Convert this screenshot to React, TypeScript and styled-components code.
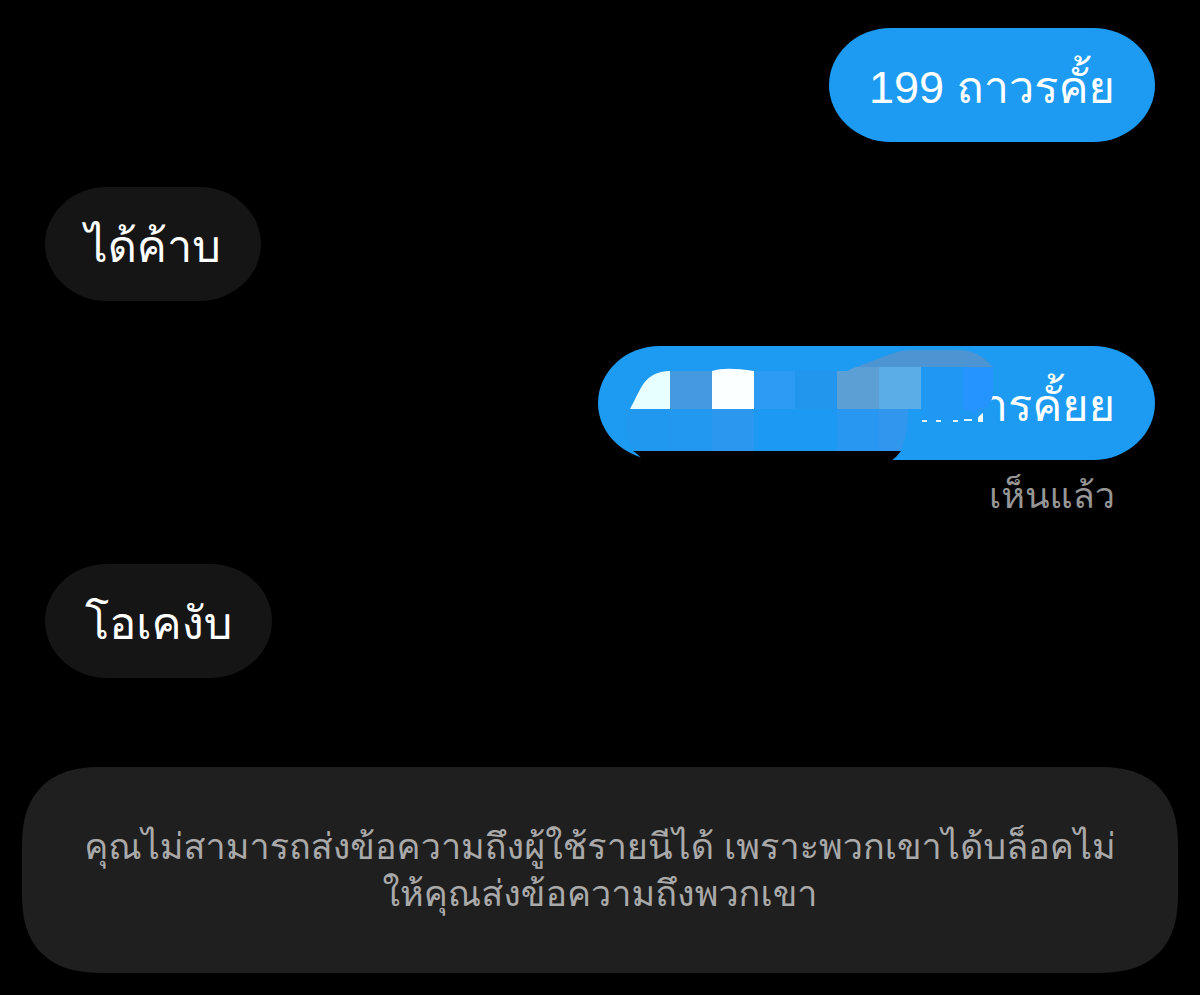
import React from 'react';
import styled, { createGlobalStyle } from 'styled-components';

const GlobalStyle = createGlobalStyle`
  * {
    box-sizing: border-box;
  }

  body {
    margin: 0;
    background: #000;
    color: #fff;
    font-family: "Liberation Sans", Loma, sans-serif;
  }
`;

const Screen = styled.main`
  display: flex;
  flex-direction: column;
  gap: 89px;
  padding: 28px 22px 22px;
`;

const Thread = styled.section`
  display: flex;
  flex-direction: column;
  padding: 0 23px;
`;

const Row = styled.div<{ $own?: boolean }>`
  display: flex;
  flex-direction: column;
  align-items: ${p => (p.$own ? 'flex-end' : 'flex-start')};

  & + & {
    margin-top: 45px;
  }
`;

const Bubble = styled.p<{ $own?: boolean }>`
  position: relative;
  margin: 0;
  padding: 30px 40px 24px;
  border-radius: 62px / 57px;
  background: ${p => (p.$own ? '#1d9bf3' : '#151515')};
  font-size: 45px;
  line-height: 60px;
  white-space: nowrap;
`;

const CensoredBubble = styled(Bubble)`
  width: 557px;
  text-align: right;
`;

const Mosaic = styled.svg`
  position: absolute;
  top: 0;
  left: 0;
  width: 400px;
  height: 120px;
`;

const Seen = styled.span`
  padding: 12px 40px 0;
  color: #969696;
  font-size: 36px;
  line-height: 47px;
`;

const Notice = styled.footer`
  padding: 56px 40px;
  border-radius: 68px;
  background: #1f1f1f;
  color: #a9a9a9;
  font-size: 36px;
  line-height: 47px;
  text-align: center;

  @supports (corner-shape: superellipse(1.3)) {
    border-radius: 80px;
    corner-shape: superellipse(1.3);
  }
`;

const tiles = [
  { x: 72, y: 25, w: 42, h: 38, fill: '#4499df' },
  { x: 156, y: 25, w: 41, h: 38, fill: '#2d9af4' },
  { x: 197, y: 25, w: 42, h: 38, fill: '#2295ec' },
  { x: 281, y: 21, w: 42, h: 42, fill: '#5aade6' },
  { x: 72, y: 63, w: 42, h: 42, fill: '#2398f0' },
  { x: 114, y: 63, w: 42, h: 42, fill: '#2c97ee' },
  { x: 156, y: 63, w: 83, h: 42, fill: '#1c99f3' },
  { x: 239, y: 63, w: 42, h: 42, fill: '#2897f2' },
];

function CensorMosaic() {
  return (
    <Mosaic viewBox="0 0 400 120" aria-hidden="true">
      <path d="M249 25C262 20 280 12 299 6C306 4 312 4 319 4H360C376 4 386 11 395 21H281V25Z" fill="#4d94d3" />
      <path d="M323 21H395V48C393 60 386 70 372 74H323Z" fill="#1f98f3" />
      <path d="M365 21H395V48C393 56 388 62 380 67L365 63Z" fill="#2694ff" />
      {tiles.map(t => (
        <rect key={`${t.x}-${t.y}`} x={t.x} y={t.y} width={t.w} height={t.h} fill={t.fill} />
      ))}
      <path d="M239 25H249L258 21H281V63H239Z" fill="#5c9fd5" />
      <path d="M28 63H72V105H36C28 94 25 78 28 63Z" fill="#2198f0" />
      <path d="M281 63H310C310 80 308 92 303 105H281Z" fill="#3096ee" />
      <path d="M32 63C37 54 41 44 46 37C52 29 61 25 72 25V63Z" fill="#e8ffff" />
      <path d="M114 25C124 22 136 22 156 25V63H114Z" fill="#fbffff" />
      <path d="M35 105H303C300 109 297 112 293 115V120H35V113L43 112C41 109 38 107 35 105Z" fill="#000" />
      <path d="M324 75h5M338 75h5M355 75h5M366 74h8" stroke="#dff4ff" strokeWidth="2" />
      <path d="M380 76V72C381 70 383 68 385 67V76Z" fill="#f4fdff" />
    </Mosaic>
  );
}

export default function App() {
  return (
    <>
      <GlobalStyle />
      <Screen>
        <Thread>
          <Row $own>
            <Bubble $own>199 ถาวรคั้ย</Bubble>
          </Row>
          <Row>
            <Bubble>ได้ค้าบ</Bubble>
          </Row>
          <Row $own>
            <CensoredBubble $own>
              ารคั้ยย
              <CensorMosaic />
            </CensoredBubble>
            <Seen>เห็นแล้ว</Seen>
          </Row>
          <Row>
            <Bubble>โอเคงับ</Bubble>
          </Row>
        </Thread>
        <Notice>
          คุณไม่สามารถส่งข้อความถึงผู้ใช้รายนีได้ เพราะพวกเขาได้บล็อคไม่
          <br />
          ให้คุณส่งข้อความถึงพวกเขา
        </Notice>
      </Screen>
    </>
  );
}
